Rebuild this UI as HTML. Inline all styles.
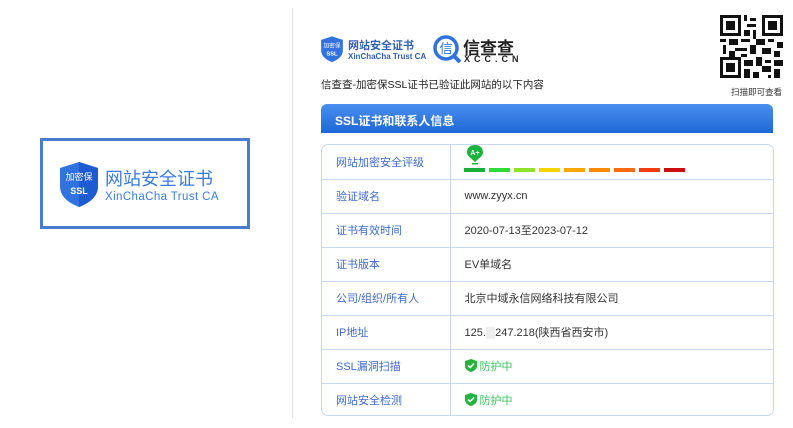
<!DOCTYPE html><html><head><meta charset="utf-8"><style>
*{margin:0;padding:0;box-sizing:border-box}
body{width:793px;height:428px;background:#fff;position:relative;overflow:hidden;font-family:"Liberation Sans","Noto Sans CJK SC",sans-serif;}
.abs{position:absolute}
.lbl{color:#3d6ad0;font-size:11px}
.val{color:#333;font-size:11px}
table{border-collapse:collapse}
</style></head><body>
<div class="abs" style="left:292px;top:8px;width:1px;height:410px;background:#e2e2e2"></div>
<!-- left badge -->
<div class="abs" style="left:40px;top:138px;width:210px;height:91px;border:3px solid #4a7cd0;background:#fff"></div>
<svg class="abs" style="left:58px;top:160px" width="42" height="48" viewBox="0 0 42 48"><path d="M21 2 L40 8 L40 26 C40 37 31 43 21 47 C11 43 2 37 2 26 L2 8 Z" fill="#2f72e0"/><path d="M21 2 L40 8 L40 26 C40 37 31 43 21 47Z" fill="#1c5cd0"/><text x="21" y="20" font-size="9" fill="#fff" text-anchor="middle" font-family="Noto Sans CJK SC">加密保</text><text x="21" y="34" font-size="9" fill="#fff" text-anchor="middle" font-weight="bold">SSL</text></svg>
<div class="abs" style="left:105px;top:165px;font-size:18px;color:#3a7be0">网站安全证书</div>
<div class="abs" style="left:105px;top:191px;font-size:11.5px;color:#3a7be0;letter-spacing:.4px">XinChaCha Trust CA</div>
<!-- top logos -->
<svg class="abs" style="left:320px;top:35px" width="24" height="28" viewBox="0 0 42 48"><path d="M21 2 L40 8 L40 26 C40 37 31 43 21 47 C11 43 2 37 2 26 L2 8 Z" fill="#2f72e0"/><text x="21" y="21" font-size="10" fill="#fff" text-anchor="middle" font-family="Noto Sans CJK SC">加密保</text><text x="21" y="35" font-size="10" fill="#fff" text-anchor="middle" font-weight="bold">SSL</text></svg>
<div class="abs" style="left:348px;top:37px;font-size:11px;color:#2f5fb8;font-weight:bold">网站安全证书</div>
<div class="abs" style="left:348px;top:52px;font-size:8px;color:#2f5fb8;font-weight:bold">XinChaCha Trust CA</div>
<svg class="abs" style="left:432px;top:34px" width="30" height="30" viewBox="0 0 30 30"><circle cx="14" cy="14" r="11" fill="none" stroke="#2f72e0" stroke-width="3.5"/><path d="M22 22 L28 28" stroke="#2f72e0" stroke-width="4"/><text x="14" y="19" font-size="13" fill="#2f72e0" text-anchor="middle" font-family="Noto Sans CJK SC">信</text></svg>
<div class="abs" style="left:463px;top:34px;font-size:17px;color:#222;font-weight:bold">信查查</div>
<div class="abs" style="left:464px;top:54px;font-size:9px;color:#222;letter-spacing:4px;font-weight:bold">XCC.CN</div>
<div class="abs" style="left:321px;top:77px;font-size:10.5px;color:#222">信查查-加密保SSL证书已验证此网站的以下内容</div>
<!-- QR -->
<svg class="abs" style="left:720px;top:15px" width="63" height="63" viewBox="0 0 21 21" shape-rendering="crispEdges"><rect width="21" height="21" fill="#fff"/>
<g fill="#111"><path d="M0 0h7v7h-7zM14 0h7v7h-7zM0 14h7v7h-7z"/></g><g fill="#fff"><path d="M1 1h5v5h-5zM15 1h5v5h-5zM1 15h5v5h-5z"/></g><g fill="#111"><path d="M2 2h3v3h-3zM16 2h3v3h-3zM2 16h3v3h-3z"/>
<path d="M8 0h1v2h-1zM10 1h2v1h-2zM9 3h3v1h-3zM8 5h2v2h-2zM11 5h1v3h-1zM0 8h2v1h-2zM3 8h3v2h-3zM7 8h3v1h-3zM12 8h3v2h-3zM16 8h2v1h-2zM19 9h2v2h-2zM1 10h1v3h-1zM5 11h4v1h-4zM10 10h2v3h-2zM14 11h3v2h-3zM18 12h2v2h-2zM3 12h2v2h-2zM7 13h2v1h-2zM8 15h3v2h-3zM12 14h2v3h-2zM15 15h2v1h-2zM18 15h3v2h-3zM14 17h3v2h-3zM8 18h2v3h-2zM11 19h2v2h-2zM18 18h2v3h-2zM16 20h1v1h-1z"/></g></svg>
<div class="abs" style="left:731px;top:86px;font-size:8.5px;color:#333">扫描即可查看</div>
<!-- header bar -->
<div class="abs" style="left:321px;top:104px;width:452px;height:29px;border-radius:6px 6px 0 0;background:linear-gradient(#4b8ff0,#1d68d6);color:#fff;font-weight:bold;font-size:12px;padding:8px 0 0 14px">SSL证书和联系人信息</div>
<!-- table -->
<div class="abs" style="left:321px;top:144px;width:453px;height:272px;border:1px solid #c6d9f2;border-radius:7px;overflow:hidden">
<table style="width:100%">
<tr style="height:34px"><td class="lbl" style="width:128px;padding-left:14px;border-right:1px solid #c6d9f2;border-bottom:1px solid #c6d9f2">网站加密安全评级</td><td style="border-bottom:1px solid #c6d9f2;position:relative"></td></tr>
<tr style="height:34px"><td class="lbl" style="padding-left:14px;border-right:1px solid #c6d9f2;border-bottom:1px solid #c6d9f2">验证域名</td><td class="val" style="padding-left:14px;border-bottom:1px solid #c6d9f2">www.zyyx.cn</td></tr>
<tr style="height:34px"><td class="lbl" style="padding-left:14px;border-right:1px solid #c6d9f2;border-bottom:1px solid #c6d9f2">证书有效时间</td><td class="val" style="padding-left:14px;border-bottom:1px solid #c6d9f2">2020-07-13至2023-07-12</td></tr>
<tr style="height:34px"><td class="lbl" style="padding-left:14px;border-right:1px solid #c6d9f2;border-bottom:1px solid #c6d9f2">证书版本</td><td class="val" style="padding-left:14px;border-bottom:1px solid #c6d9f2">EV单域名</td></tr>
<tr style="height:34px"><td class="lbl" style="padding-left:14px;border-right:1px solid #c6d9f2;border-bottom:1px solid #c6d9f2">公司/组织/所有人</td><td class="val" style="padding-left:14px;border-bottom:1px solid #c6d9f2">北京中域永信网络科技有限公司</td></tr>
<tr style="height:34px"><td class="lbl" style="padding-left:14px;border-right:1px solid #c6d9f2;border-bottom:1px solid #c6d9f2">IP地址</td><td class="val" style="padding-left:14px;border-bottom:1px solid #c6d9f2">125.<span style="color:#ddd;background:#eee">&nbsp;&nbsp;&nbsp;</span>247.218(陕西省西安市)</td></tr>
<tr style="height:34px"><td class="lbl" style="padding-left:14px;border-right:1px solid #c6d9f2;border-bottom:1px solid #c6d9f2">SSL漏洞扫描</td><td class="val" style="padding-left:14px;border-bottom:1px solid #c6d9f2;color:#3bc45a"><svg width="12" height="13" viewBox="0 0 12 13" style="vertical-align:-2px;margin-right:3px"><path d="M6 0L12 2V7C12 10 9 12 6 13C3 12 0 10 0 7V2Z" fill="#22b43e"/><path d="M3 6.5L5.2 8.5L9 4.5" stroke="#fff" stroke-width="1.6" fill="none"/></svg>防护中</td></tr>
<tr style="height:34px"><td class="lbl" style="padding-left:14px;border-right:1px solid #c6d9f2">网站安全检测</td><td class="val" style="padding-left:14px;color:#3bc45a"><svg width="12" height="13" viewBox="0 0 12 13" style="vertical-align:-2px;margin-right:3px"><path d="M6 0L12 2V7C12 10 9 12 6 13C3 12 0 10 0 7V2Z" fill="#22b43e"/><path d="M3 6.5L5.2 8.5L9 4.5" stroke="#fff" stroke-width="1.6" fill="none"/></svg>防护中</td></tr>
</table></div>
<!-- meter -->
<svg class="abs" style="left:466px;top:145px" width="18" height="20" viewBox="0 0 18 20"><path d="M9 0C14 0 17 3 17 7.5C17 11 13 13 9 17C5 13 1 11 1 7.5C1 3 4 0 9 0Z" fill="#19b43c"/><text x="9" y="10" font-size="7" fill="#fff" text-anchor="middle" font-weight="bold">A+</text><rect x="6" y="18" width="6" height="1.5" fill="#19b43c"/></svg>
<div class="abs" style="left:464px;top:168px;display:flex;gap:4px">
<div style="width:21px;height:4px;background:#1aad3a"></div><div style="width:21px;height:4px;background:#2fdc3a"></div><div style="width:21px;height:4px;background:#8ee22a"></div><div style="width:21px;height:4px;background:#f5d400"></div><div style="width:21px;height:4px;background:#f7a800"></div><div style="width:21px;height:4px;background:#f98b00"></div><div style="width:21px;height:4px;background:#f86a10"></div><div style="width:21px;height:4px;background:#f33a10"></div><div style="width:21px;height:4px;background:#cc1010"></div>
</div>
</body></html>
